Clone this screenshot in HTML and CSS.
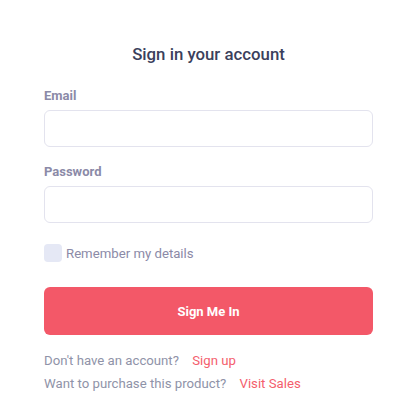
FILE: index.html
```html
<!DOCTYPE html>
<html>
<head>
<meta charset="utf-8">
<link rel="stylesheet" href="styles.css">
</head>
<body>
<main class="card">
  <h1 class="title">Sign in your account</h1>
  <form class="form">
    <label class="field">
      <span class="label">Email</span>
      <input class="input" type="email">
    </label>
    <label class="field">
      <span class="label">Password</span>
      <input class="input" type="password">
    </label>
    <label class="remember">
      <span class="check"></span>
      <span class="remember-text">Remember my details</span>
    </label>
    <button class="btn" type="button">Sign Me In</button>
  </form>
  <div class="links">
    <p class="line">Don't have an account? <a class="link" href="#">Sign up</a></p>
    <p class="line">Want to purchase this product? <a class="link" href="#">Visit Sales</a></p>
  </div>
</main>
</body>
</html>
```

FILE: styles.css
```css
* { box-sizing: border-box; }
html, body { margin: 0; padding: 0; background: #ffffff; }
body { font-family: Roboto, "Liberation Sans", sans-serif; }
.card { padding: 42px 44px 0 44px; display: flex; flex-direction: column; }
.title { margin: 0; text-align: center; font-size: 16.8px; font-weight: 500; color: #3b3f5c; line-height: 24px; }
.form { display: flex; flex-direction: column; margin-top: 21px; }
.field { display: flex; flex-direction: column; margin-bottom: 16px; }
.label { font-size: 13px; font-weight: 700; color: #8b8aa7; line-height: 18px; margin-bottom: 5px; }
.input { height: 37px; border: 1px solid #e3e3ee; border-radius: 6px; background: #fff; outline: none; }
.remember { display: flex; align-items: center; gap: 4px; margin-top: 5px; height: 18px; }
.check { width: 18px; height: 18px; border-radius: 4px; background: #e5e8f5; }
.remember-text { font-size: 13.2px; color: #8b8aa7; }
.btn { margin-top: 25px; height: 48px; border: none; border-radius: 6px; background: #f35868; color: #fff; font-family: inherit; font-size: 13px; font-weight: 700; }
.links { margin-top: 17px; }
.line { margin: 0 0 5px; font-size: 13.2px; line-height: 18px; color: #8f93a8; }
.link { color: #f45e6d; text-decoration: none; margin-left: 10px; }
```
